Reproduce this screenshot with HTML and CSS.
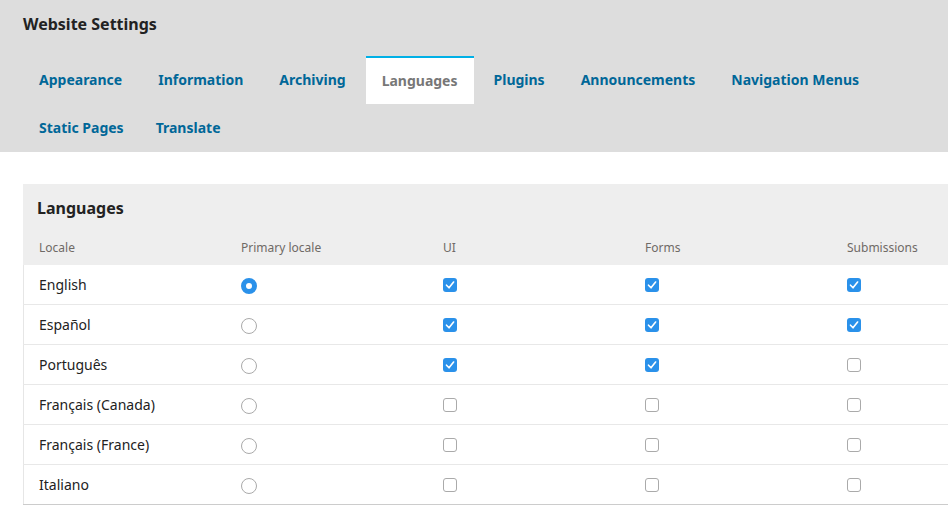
FILE: index.html
```html
<!DOCTYPE html>
<html lang="en">
<head>
<meta charset="utf-8">
<title>Website Settings</title>
<link rel="stylesheet" href="styles.css">
</head>
<body>
<header class="page-header">
  <h1 class="page-title">Website Settings</h1>
  <nav class="tabs">
    <a class="tab">Appearance</a>
    <a class="tab">Information</a>
    <a class="tab">Archiving</a>
    <a class="tab tab-active">Languages</a>
    <a class="tab">Plugins</a>
    <a class="tab">Announcements</a>
    <a class="tab">Navigation Menus</a>
    <a class="tab">Static Pages</a>
    <a class="tab tab-tight">Translate</a>
  </nav>
</header>
<main class="content">
  <section class="panel">
    <h2 class="panel-title">Languages</h2>
    <div class="grid">
      <div class="row head"><span>Locale</span><span>Primary locale</span><span>UI</span><span>Forms</span><span>Submissions</span></div>
      <div class="row"><span>English</span><span><i class="radio on"></i></span><span><i class="check on"></i></span><span><i class="check on"></i></span><span><i class="check on"></i></span></div>
      <div class="row"><span>Español</span><span><i class="radio"></i></span><span><i class="check on"></i></span><span><i class="check on"></i></span><span><i class="check on"></i></span></div>
      <div class="row"><span>Português</span><span><i class="radio"></i></span><span><i class="check on"></i></span><span><i class="check on"></i></span><span><i class="check"></i></span></div>
      <div class="row"><span>Français (Canada)</span><span><i class="radio"></i></span><span><i class="check"></i></span><span><i class="check"></i></span><span><i class="check"></i></span></div>
      <div class="row"><span>Français (France)</span><span><i class="radio"></i></span><span><i class="check"></i></span><span><i class="check"></i></span><span><i class="check"></i></span></div>
      <div class="row"><span>Italiano</span><span><i class="radio"></i></span><span><i class="check"></i></span><span><i class="check"></i></span><span><i class="check"></i></span></div>
    </div>
  </section>
</main>
</body>
</html>
```
FILE: styles.css
```css
html, body {
  margin: 0;
  padding: 0;
}
body {
  font-family: "Noto Sans", "Open Sans", sans-serif;
  background: #fff;
  color: #222;
  overflow: hidden;
  width: 948px;
  height: 510px;
}
.page-header {
  background: #ddd;
  padding: 0 0 0 21px;
  height: 152px;
  box-sizing: border-box;
}
.page-title {
  margin: 0;
  padding: 0 0 0 2px;
  height: 56px;
  line-height: 48px;
  font-size: 16px;
  font-weight: 700;
  color: #222;
}
.tabs {
  display: flex;
  flex-wrap: wrap;
  width: 880px;
}
.tab {
  display: block;
  height: 48px;
  line-height: 48px;
  padding: 0 16px;
  margin: 0 2px;
  font-size: 14px;
  font-weight: 700;
  color: #006798;
  box-sizing: border-box;
}
.tab-tight {
  margin-left: -2px;
}
.tab-active {
  background: #fff;
  color: #777;
  border-top: 2px solid #00b0e6;
  line-height: 46px;
}
.content {
  padding: 32px 0 0 23px;
}
.panel {
  width: 925px;
  overflow: hidden;
  background: #fff;
  box-shadow: inset 1px 0 0 #e6e6e6;
}
.panel-title {
  margin: 0;
  background: #eee;
  padding: 0 14px;
  height: 48px;
  line-height: 48px;
  font-size: 16px;
  font-weight: 700;
  color: #222;
}
.grid {
  width: 1010px;
}
.row {
  display: grid;
  grid-template-columns: repeat(5, 202px);
  align-items: center;
  height: 40px;
  border-bottom: 1px solid #e8e8e8;
  box-sizing: border-box;
  font-size: 14px;
  color: #222;
}
.row > span {
  padding-left: 16px;
  white-space: nowrap;
}
.row:last-child {
  border-bottom-color: #ccc;
}
.row.head {
  background: #eee;
  height: 33px;
  border-bottom: none;
  align-items: start;
  font-size: 12px;
  line-height: 32px;
  color: #6f6a66;
}
.radio {
  display: block;
  width: 16px;
  height: 16px;
  margin-top: 3px;
  border: 1px solid #aaa;
  border-radius: 50%;
  box-sizing: border-box;
  background: #fff;
}
.radio.on {
  border: 5px solid #2a91ea;
}
.check {
  display: block;
  width: 14px;
  height: 14px;
  margin-top: 1px;
  border: 1px solid #aaa;
  border-radius: 3px;
  box-sizing: border-box;
  background: #fff;
}
.check.on {
  border: none;
  background: #2a91ea url("data:image/svg+xml;utf8,<svg xmlns='http://www.w3.org/2000/svg' width='14' height='14' viewBox='0 0 14 14'><path d='M3.5 7.2 L6 9.8 L10.6 4' fill='none' stroke='white' stroke-width='1.6' stroke-linecap='round' stroke-linejoin='round'/></svg>") no-repeat center;
}
```
